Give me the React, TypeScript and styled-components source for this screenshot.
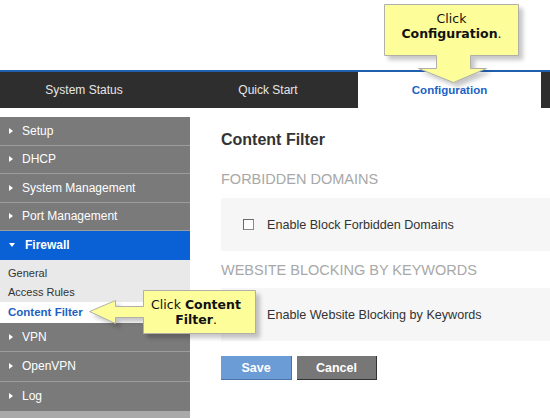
import React from "react";
import styled, { createGlobalStyle } from "styled-components";

const Global = createGlobalStyle`
  html, body { margin: 0; padding: 0; background: #fff; }
  body { font-family: "Liberation Sans", Arial, sans-serif; }
`;

const Page = styled.div`
  position: relative;
  width: 550px;
  height: 418px;
  overflow: hidden;
  background: #fff;
`;

const TopSpace = styled.div`
  height: 70px;
`;

const NavBar = styled.nav`
  display: flex;
  height: 36px;
  border-top: 2px solid #1f5fae;
  background: #2e2e2e;
`;

const Tab = styled.div<{ $w: number; $active?: boolean; $pr?: number }>`
  width: ${(p) => p.$w}px;
  padding-right: ${(p) => p.$pr ?? 0}px;
  box-sizing: border-box;
  display: flex;
  align-items: center;
  justify-content: center;
  font-size: ${(p) => (p.$active ? "11.5px" : "12px")};
  font-weight: ${(p) => (p.$active ? 700 : 400)};
  color: ${(p) => (p.$active ? "#1b63c6" : "#e6e6e6")};
  background: ${(p) => (p.$active ? "#fff" : "transparent")};
`;

const Body = styled.div`
  display: flex;
  margin-top: 9px;
  height: 301px;
`;

const Sidebar = styled.aside`
  width: 190px;
  display: flex;
  flex-direction: column;
  background: #a9a9a9;
`;

const MenuRow = styled.div<{ $open?: boolean; $last?: boolean; $tall?: boolean }>`
  height: ${(p) => (p.$tall ? 28.5 : 27.5)}px;
  flex: none;
  display: flex;
  align-items: center;
  gap: 8px;
  padding-left: 9px;
  background: ${(p) => (p.$open ? "#0a60d5" : "#7a7a7a")};
  border-bottom: 1px solid ${(p) => (p.$open ? "#0a60d5" : p.$last ? "#7a7a7a" : "#9c9c9c")};
  color: #fff;
  font-size: 12px;
  font-weight: ${(p) => (p.$open ? 700 : 400)};
`;

const Caret = styled.span<{ $down?: boolean }>`
  width: 0;
  height: 0;
  flex: none;
  ${(p) =>
    p.$down
      ? `border-left: 3.5px solid transparent; border-right: 3.5px solid transparent; border-top: 4px solid #fff; margin-right: 2px;`
      : `border-top: 3.5px solid transparent; border-bottom: 3.5px solid transparent; border-left: 4px solid #fff; margin-right: 1px;`}
`;

const SubMenu = styled.div`
  background: #e9e9e9;
  padding-top: 4px;
  flex: none;
  display: flex;
  flex-direction: column;
`;

const SubItem = styled.div<{ $current?: boolean }>`
  height: ${(p) => (p.$current ? 21 : 19)}px;
  display: flex;
  align-items: center;
  padding-left: 8px;
  font-size: ${(p) => (p.$current ? "11.5px" : "11px")};
  font-weight: ${(p) => (p.$current ? 700 : 400)};
  color: ${(p) => (p.$current ? "#1f5fbf" : "#333")};
  background: ${(p) => (p.$current ? "#fff" : "transparent")};
`;

const Filler = styled.div`
  flex: 1;
  background: #a9a9a9;
`;

const Main = styled.main`
  flex: 1;
  padding-left: 31px;
  display: flex;
  flex-direction: column;
`;

const Heading = styled.h1`
  margin: 13px 0 0;
  font-size: 16px;
  line-height: 20px;
  font-weight: 700;
  color: #333;
`;

const SectionTitle = styled.h2<{ $mt: number }>`
  margin: ${(p) => p.$mt}px 0 0;
  font-size: 14.5px;
  line-height: 18px;
  font-weight: 400;
  color: #a8a8a8;
  text-transform: uppercase;
  white-space: nowrap;
`;

const OptionBox = styled.div<{ $mt: number }>`
  margin-top: ${(p) => p.$mt}px;
  height: 53px;
  background: #f6f6f6;
  display: flex;
  align-items: center;
  padding-left: 22px;
  gap: 13px;
`;

const CheckBox = styled.span`
  width: 9px;
  height: 9px;
  flex: none;
  background: #fff;
  border: 1px solid #8a8a8a;
  border-top-color: #6a6a6a;
  border-left-color: #6a6a6a;
`;

const OptionLabel = styled.span`
  font-size: 12.6px;
  color: #333;
`;

const Buttons = styled.div`
  margin-top: 15px;
  display: flex;
  gap: 5px;
`;

const Button = styled.button<{ $primary?: boolean }>`
  height: 24px;
  width: ${(p) => (p.$primary ? 71 : 80)}px;
  padding: 0;
  border: none;
  border-right: 1px solid ${(p) => (p.$primary ? "#4a74a8" : "#333")};
  border-bottom: 1px solid ${(p) => (p.$primary ? "#4a74a8" : "#333")};
  background: ${(p) => (p.$primary ? "#6c9cd6" : "#777")};
  color: #fff;
  font-family: "Liberation Sans", Arial, sans-serif;
  font-size: 12.5px;
  font-weight: 700;
`;

const Callout = styled.div<{ $x: number; $y: number; $w: number; $h: number }>`
  position: absolute;
  left: ${(p) => p.$x}px;
  top: ${(p) => p.$y}px;
  width: ${(p) => p.$w}px;
  height: ${(p) => p.$h}px;
  pointer-events: none;
  svg {
    position: absolute;
    left: 0;
    top: 0;
    overflow: visible;
    filter: drop-shadow(4px 4px 2px rgba(0, 0, 0, 0.22));
  }
`;

const CalloutText = styled.div<{ $x: number; $y: number; $w: number }>`
  position: absolute;
  left: ${(p) => p.$x}px;
  top: ${(p) => p.$y}px;
  width: ${(p) => p.$w}px;
  text-align: center;
  font-family: "DejaVu Sans", Verdana, sans-serif;
  font-size: 12.5px;
  line-height: 15px;
  color: #111;
  white-space: nowrap;
  b { font-weight: 700; }
`;

const topMenu = ["Setup", "DHCP", "System Management", "Port Management"];
const bottomMenu = ["VPN", "OpenVPN", "Log"];

export default function App() {
  return (
    <Page>
      <Global />
      <TopSpace />
      <NavBar>
        <Tab $w={178} $pr={10}>System Status</Tab>
        <Tab $w={180}>Quick Start</Tab>
        <Tab $w={183} $active>Configuration</Tab>
      </NavBar>
      <Body>
        <Sidebar>
          {topMenu.map((m) => (
            <MenuRow key={m}>
              <Caret />
              {m}
            </MenuRow>
          ))}
          <MenuRow $open>
            <Caret $down />
            Firewall
          </MenuRow>
          <SubMenu>
            <SubItem>General</SubItem>
            <SubItem>Access Rules</SubItem>
            <SubItem $current>Content Filter</SubItem>
          </SubMenu>
          {bottomMenu.map((m, i) => (
            <MenuRow key={m} $tall $last={i === bottomMenu.length - 1}>
              <Caret />
              {m}
            </MenuRow>
          ))}
          <Filler />
        </Sidebar>
        <Main>
          <Heading>Content Filter</Heading>
          <SectionTitle $mt={20}>Forbidden Domains</SectionTitle>
          <OptionBox $mt={10}>
            <CheckBox />
            <OptionLabel>Enable Block Forbidden Domains</OptionLabel>
          </OptionBox>
          <SectionTitle $mt={10}>Website Blocking by Keywords</SectionTitle>
          <OptionBox $mt={9}>
            <CheckBox />
            <OptionLabel>Enable Website Blocking by Keywords</OptionLabel>
          </OptionBox>
          <Buttons>
            <Button $primary>Save</Button>
            <Button>Cancel</Button>
          </Buttons>
        </Main>
      </Body>

      <Callout $x={384} $y={4} $w={135} $h={80}>
        <svg width="135" height="80" viewBox="0 0 135 80">
          <polygon
            points="0.5,0.5 134.5,0.5 134.5,51.5 86.5,51.5 86.5,64.5 102.5,64.5 69.5,78.5 34.5,64.5 52.5,64.5 52.5,51.5 0.5,51.5"
            fill="#fdfd9a"
            stroke="#b0b0a8"
            strokeWidth="1"
          />
        </svg>
        <CalloutText $x={0} $y={7} $w={135}>
          Click
          <br />
          <b>Configuration</b>.
        </CalloutText>
      </Callout>

      <Callout $x={88} $y={290} $w={168} $h={44}>
        <svg width="168" height="44" viewBox="0 0 168 44">
          <polygon
            points="55.5,0.5 167.5,0.5 167.5,43.5 55.5,43.5 55.5,27.5 27.5,27.5 27.5,33.5 1.5,21.5 27.5,10.5 27.5,16.5 55.5,16.5"
            fill="#fdfd9a"
            stroke="#b0b0a8"
            strokeWidth="1"
          />
        </svg>
        <CalloutText $x={55} $y={7} $w={106}>
          Click <b>Content</b>
          <br />
          <b>Filter</b>.
        </CalloutText>
      </Callout>
    </Page>
  );
}
